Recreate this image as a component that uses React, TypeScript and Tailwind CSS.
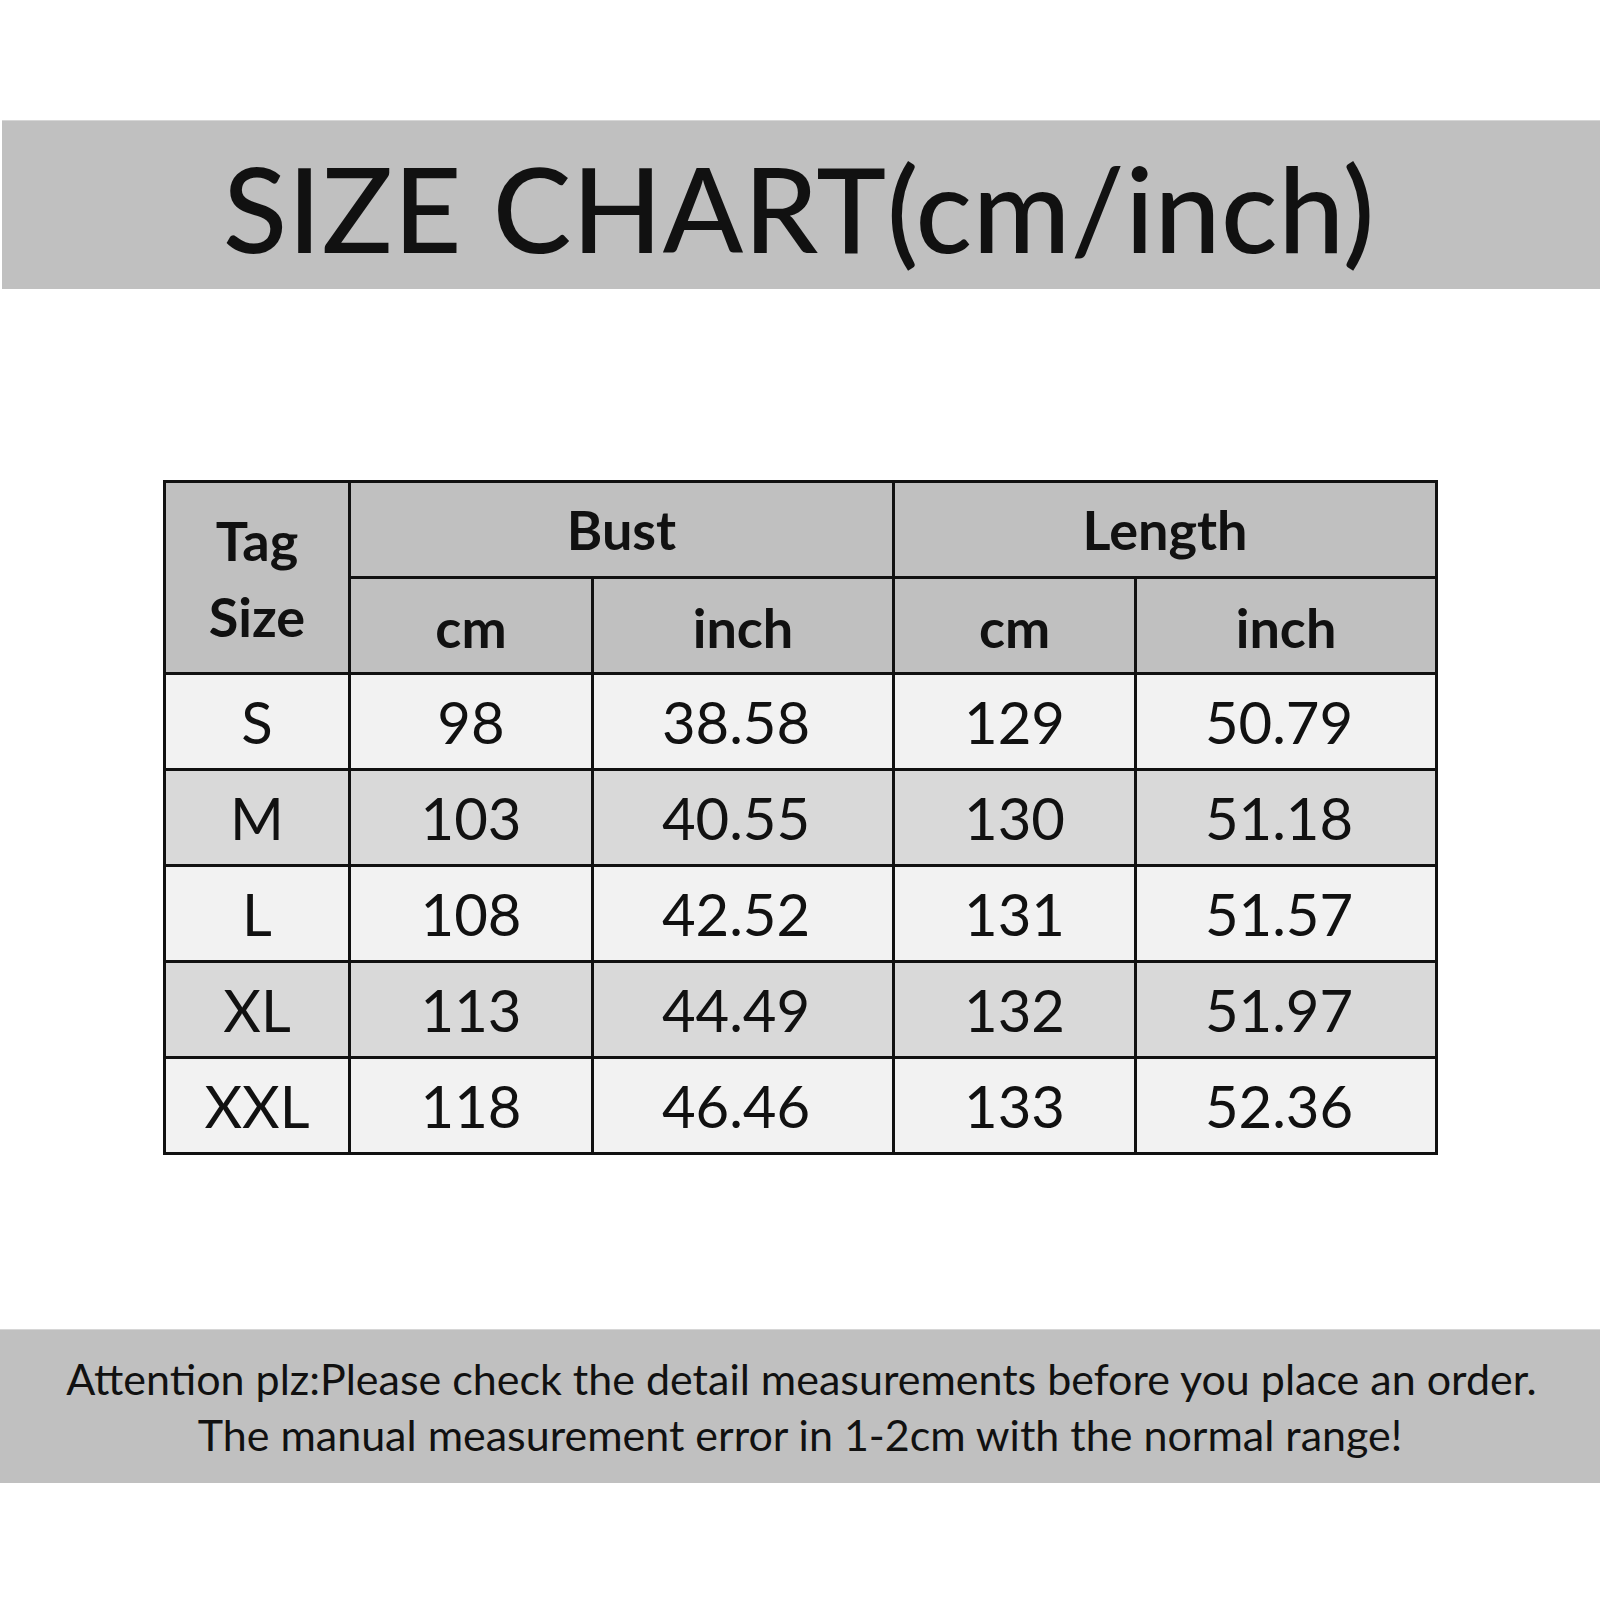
import React from 'react';

const rows = [
  { size: 'S', bustCm: '98', bustIn: '38.58', lenCm: '129', lenIn: '50.79', bg: 'bg-[#f2f2f2]' },
  { size: 'M', bustCm: '103', bustIn: '40.55', lenCm: '130', lenIn: '51.18', bg: 'bg-[#d9d9d9]' },
  { size: 'L', bustCm: '108', bustIn: '42.52', lenCm: '131', lenIn: '51.57', bg: 'bg-[#f2f2f2]' },
  { size: 'XL', bustCm: '113', bustIn: '44.49', lenCm: '132', lenIn: '51.97', bg: 'bg-[#d9d9d9]' },
  { size: 'XXL', bustCm: '118', bustIn: '46.46', lenCm: '133', lenIn: '52.36', bg: 'bg-[#f2f2f2]' },
];

const SizeChart = () => {
  return (
    <div className="w-[1600px] h-[1600px] bg-white flex flex-col text-[#111] font-['Lato','Open_Sans',sans-serif]">
      {/* Title band */}
      <div className="mt-[120px] ml-[2px] h-[169px] bg-[#c0c0c0] border-t border-[#d6d6d6] flex items-center justify-center">
        <h1 className="text-[118px] leading-none font-medium tracking-[0.6px] pr-[4px] pt-[6px]">
          SIZE CHART(cm/inch)
        </h1>
      </div>

      {/* Table */}
      <div className="mt-[191px] ml-[163px]">
        <table className="table-fixed border-collapse border-[3px] border-[#111] w-[1272px]">
          <colgroup>
            <col className="w-[185px]" />
            <col className="w-[243px]" />
            <col className="w-[301px]" />
            <col className="w-[242px]" />
            <col className="w-[301px]" />
          </colgroup>
          <thead className="bg-[#c0c0c0] font-bold text-[54px]">
            <tr className="h-[96px]">
              <th rowSpan={2} className="border-[3px] border-[#111] leading-[76px] font-bold pt-[2px]">
                Tag
                <br />
                Size
              </th>
              <th colSpan={2} className="border-[3px] border-[#111] font-bold">Bust</th>
              <th colSpan={2} className="border-[3px] border-[#111] font-bold">Length</th>
            </tr>
            <tr className="h-[96px]">
              <th className="border-[3px] border-[#111] font-bold pt-[4px]">cm</th>
              <th className="border-[3px] border-[#111] font-bold pt-[4px]">inch</th>
              <th className="border-[3px] border-[#111] font-bold pt-[4px]">cm</th>
              <th className="border-[3px] border-[#111] font-bold pt-[4px]">inch</th>
            </tr>
          </thead>
          <tbody className="text-[58px] text-center">
            {rows.map((r) => (
              <tr key={r.size} className={`h-[96px] ${r.bg}`}>
                <td className="border-[3px] border-[#111]">{r.size}</td>
                <td className="border-[3px] border-[#111]">{r.bustCm}</td>
                <td className="border-[3px] border-[#111] pr-[14px]">{r.bustIn}</td>
                <td className="border-[3px] border-[#111]">{r.lenCm}</td>
                <td className="border-[3px] border-[#111] pr-[14px]">{r.lenIn}</td>
              </tr>
            ))}
          </tbody>
        </table>
      </div>

      {/* Notice band */}
      <div className="mt-[174px] h-[154px] bg-[#c0c0c0] border-t border-[#d6d6d6] flex flex-col items-center justify-center text-[43px] leading-[56px] text-center">
        <p className="pl-[3px]">Attention plz:Please check the detail measurements before you place an order.</p>
        <p>The manual measurement error in 1-2cm with the normal range!</p>
      </div>
    </div>
  );
};

export default function App() {
  return <SizeChart />;
}
